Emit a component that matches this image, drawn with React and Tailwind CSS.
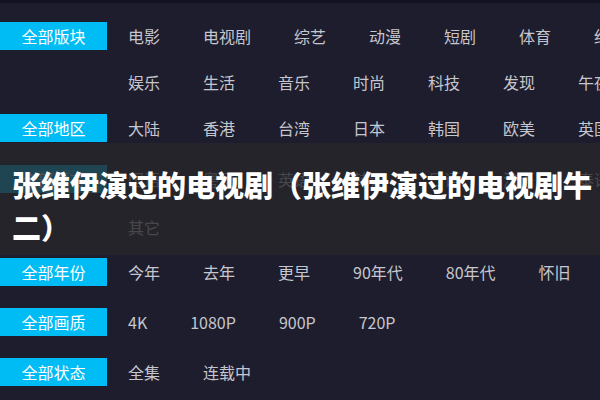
const rows = [
  { label: "全部版块", items: ["电影", "电视剧", "综艺", "动漫", "短剧", "体育", "纪录片"], mt: "mt-0" },
  { label: null, items: ["娱乐", "生活", "音乐", "时尚", "科技", "发现", "午夜"], mt: "mt-[18px]" },
  { label: "全部地区", items: ["大陆", "香港", "台湾", "日本", "韩国", "欧美", "英国"], mt: "mt-[18px]" },
  { label: "全部语言", items: ["国语", "粤语", "英语", "韩语", "日语", "法语", "泰语"], mt: "mt-[23px]" },
  { label: null, items: ["其它"], mt: "mt-[20px]" },
  { label: "全部年份", items: ["今年", "去年", "更早", "90年代", "80年代", "怀旧"], mt: "mt-[17px]" },
  { label: "全部画质", items: ["4K", "1080P", "900P", "720P"], mt: "mt-[22px]" },
  { label: "全部状态", items: ["全集", "连载中"], mt: "mt-[22px]" },
];

function FilterRow({ label, items, mt }) {
  return (
    <div className={`flex h-[28px] items-center whitespace-nowrap ${mt}`}>
      {label ? (
        <div className="flex h-[28px] w-[107px] shrink-0 items-center justify-center bg-[#00bcf5] text-[16px] text-white">
          {label}
        </div>
      ) : (
        <div className="w-[107px] shrink-0" />
      )}
      <div className="ml-[21px] flex items-center">
        {items.map((t) => (
          <span key={t} className="mr-[43px] shrink-0 text-[16px] text-[#c6c6ce]">
            {t}
          </span>
        ))}
      </div>
    </div>
  );
}

export default function App() {
  return (
    <div
      className="relative h-[400px] w-[600px] overflow-hidden bg-[#1e1d2d]"
      style={{ fontFamily: '"Noto Sans CJK SC", "Noto Sans", sans-serif' }}
    >
      <div className="h-[3px] bg-[#121220]" />
      <div className="flex flex-col pt-[19px]">
        {rows.map((r, i) => (
          <FilterRow key={i} {...r} />
        ))}
      </div>

      {/* title banner over the filter list */}
      <div className="absolute left-0 right-0 top-[143px] h-[112px] bg-[#27272b]/80 pl-[12px] pt-[20px]">
        <h1 className="text-[29px] font-black leading-[42px] text-white">
          张维伊演过的电视剧（张维伊演过的电视剧牛二）
        </h1>
      </div>
    </div>
  );
}
